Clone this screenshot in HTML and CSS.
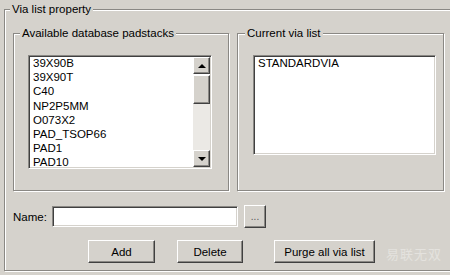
FILE: index.html
```html
<!DOCTYPE html>
<html lang="en">
<head>
    <meta charset="UTF-8">
    <title>Via list property</title>
    <link rel="stylesheet" href="styles.css">
</head>
<body>

    <fieldset class="group outer">
        <legend>Via list property</legend>

        <div class="lists">
            <fieldset class="group available">
                <legend>Available database padstacks</legend>
                <div class="listbox tall">
                    <ul class="items">
                        <li>39X90B</li>
                        <li>39X90T</li>
                        <li>C40</li>
                        <li>NP2P5MM</li>
                        <li>O073X2</li>
                        <li>PAD_TSOP66</li>
                        <li>PAD1</li>
                        <li>PAD10</li>
                    </ul>
                    <div class="scrollbar">
                        <div class="sb-btn"><span class="arrow up"></span></div>
                        <div class="sb-thumb"></div>
                        <div class="sb-track"></div>
                        <div class="sb-btn"><span class="arrow down"></span></div>
                    </div>
                </div>
            </fieldset>

            <fieldset class="group current">
                <legend>Current via list</legend>
                <div class="listbox short">
                    <ul class="items">
                        <li>STANDARDVIA</li>
                    </ul>
                </div>
            </fieldset>
        </div>

        <div class="name-row">
            <label for="viaName">Name:</label>
            <input type="text" id="viaName" class="text-input">
            <button class="btn browse">...</button>
        </div>

        <div class="button-row">
            <button class="btn add">Add</button>
            <button class="btn delete">Delete</button>
            <button class="btn purge">Purge all via list</button>
        </div>
    </fieldset>

    <div class="watermark">易联无双</div>

</body>
</html>
```

FILE: styles.css
```css
body {
    margin: 0;
    width: 450px;
    height: 275px;
    overflow: hidden;
    background-color: #d5d2cc;
    color: #000000;
    font-family: "Liberation Sans", Arial, sans-serif;
    font-size: 11.5px;
    position: relative;
}

/* etched group boxes */
.group {
    box-sizing: border-box;
    margin: 0;
    padding: 0;
    min-width: 0;
    border: 1px solid #8a8884;
    box-shadow: 1px 1px 0 #ffffff, inset 1px 1px 0 #ffffff;
}

.group legend {
    padding: 0 2px;
    margin-left: -8px;
    line-height: 14px;
    background-color: #d5d2cc;
}

/* right edge of the dialog is cut off by the screenshot */
.outer {
    margin: 2px 0 0 4px;
    width: 446px;
    height: 269px;
    padding: 0 0 0 8px;
    border-right: none;
}

.outer > legend {
    margin-left: -3px;
}

.lists {
    display: flex;
    gap: 8px;
    margin-top: 10px;
}

.available {
    width: 216px;
    height: 165px;
    padding: 15px 0 0 14px;
}

.current {
    width: 207px;
    height: 165px;
    padding: 15px 0 0 15px;
}

/* sunken list boxes */
.listbox {
    box-sizing: border-box;
    display: flex;
    background-color: #ffffff;
    border: 1px solid;
    border-color: #8a8884 #ffffff #ffffff #8a8884;
    box-shadow: inset 1px 1px 0 #404040, inset -1px -1px 0 #d5d2cc;
    padding: 1px;
}

.listbox.tall {
    width: 184px;
    height: 114px;
}

.listbox.short {
    width: 183px;
    height: 100px;
}

.items {
    flex: 1;
    list-style: none;
    margin: -1px 0 0;
    padding: 0 0 0 3px;
}

.items li {
    line-height: 14.2px;
    white-space: nowrap;
}

.scrollbar {
    width: 17px;
    display: flex;
    flex-direction: column;
}

.sb-btn,
.sb-thumb {
    box-sizing: border-box;
    background-color: #d5d2cc;
    border: 1px solid;
    border-color: #ffffff #404040 #404040 #ffffff;
    box-shadow: inset -1px -1px 0 #8a8884;
}

.sb-btn {
    height: 17px;
    display: flex;
    align-items: center;
    justify-content: center;
}

.sb-thumb {
    height: 29px;
    margin-top: 1px;
}

.sb-track {
    flex: 1;
    background-color: #ebe9e5;
}

.arrow {
    width: 0;
    height: 0;
    border-left: 4px solid transparent;
    border-right: 4px solid transparent;
}

.arrow.up {
    border-bottom: 4px solid #000000;
}

.arrow.down {
    border-top: 4px solid #000000;
}

/* name row */
.name-row {
    display: flex;
    align-items: center;
    margin-top: 14px;
    height: 23px;
}

.name-row label {
    width: 39px;
}

.text-input {
    box-sizing: border-box;
    width: 186px;
    height: 21px;
    margin: 0;
    padding: 0 3px;
    background-color: #ffffff;
    border: 1px solid;
    border-color: #8a8884 #ffffff #ffffff #8a8884;
    box-shadow: inset 1px 1px 0 #404040, inset -1px -1px 0 #d5d2cc;
    outline: none;
}

/* push buttons */
.btn {
    box-sizing: border-box;
    height: 23px;
    margin: 0;
    padding: 0;
    font-family: "Liberation Sans", Arial, sans-serif;
    font-size: 11.5px;
    color: #000000;
    background-color: #d5d2cc;
    border: 1px solid;
    border-color: #ffffff #404040 #404040 #ffffff;
    box-shadow: inset -1px -1px 0 #8a8884;
}

.browse {
    width: 22px;
    margin-left: 6px;
    font-size: 10px;
    color: #555555;
}

.button-row {
    display: flex;
    margin-top: 12px;
    padding-left: 75px;
}

.add { width: 67px; }

.delete {
    width: 66px;
    margin-left: 22px;
}

.purge {
    width: 101px;
    margin-left: 31px;
}

.watermark {
    position: absolute;
    left: 386px;
    top: 244px;
    font-family: "Noto Sans CJK SC", sans-serif;
    font-size: 13px;
    color: #e4e2de;
    letter-spacing: 1px;
}
```
